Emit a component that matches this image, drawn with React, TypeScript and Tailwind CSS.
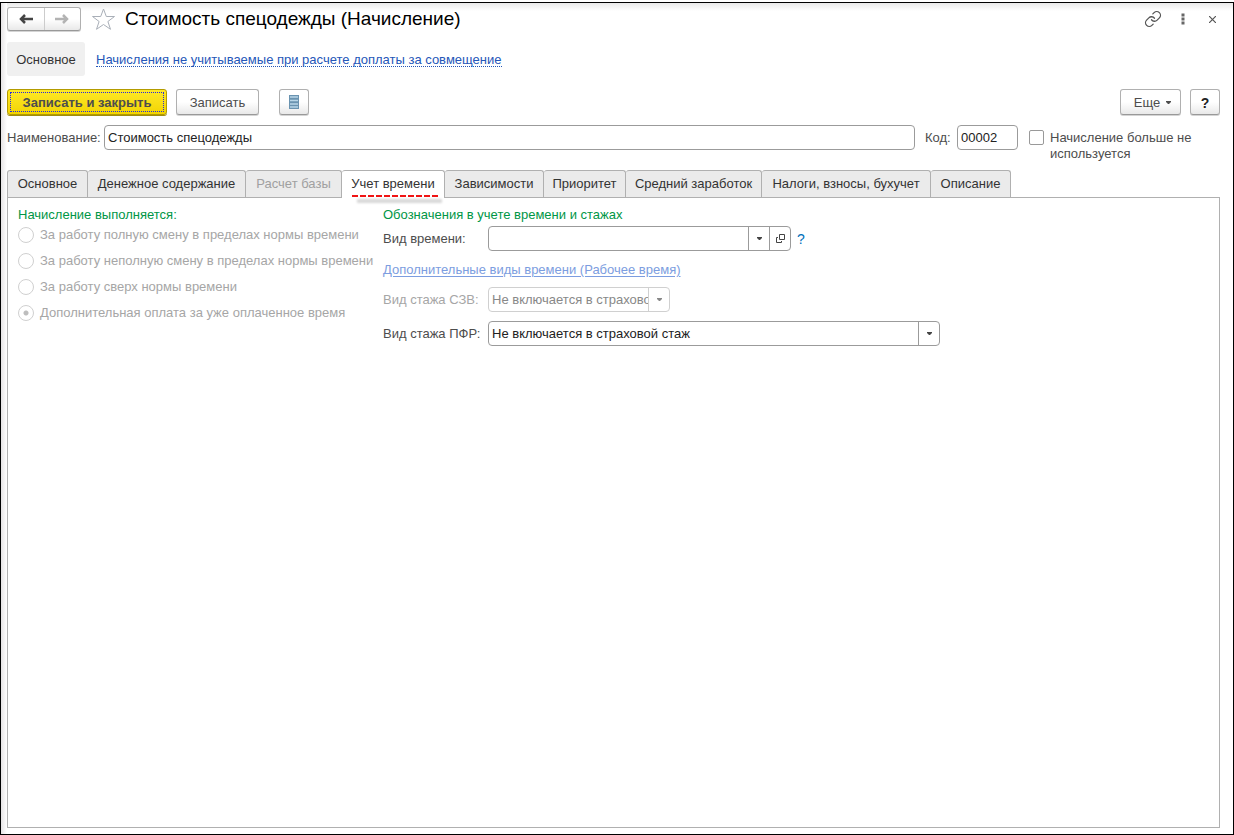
import React from "react";

const tabs = [
  { label: "Основное", width: "w-[81px]" },
  { label: "Денежное содержание", width: "w-[158px]" },
  { label: "Расчет базы", width: "w-24", disabled: true },
  { label: "Учет времени", width: "w-[103px]", active: true },
  { label: "Зависимости", width: "w-[99px]" },
  { label: "Приоритет", width: "w-[82px]" },
  { label: "Средний заработок", width: "w-[136px]" },
  { label: "Налоги, взносы, бухучет", width: "w-[169px]" },
  { label: "Описание", width: "w-20" },
];

const modes = [
  "За работу полную смену в пределах нормы времени",
  "За работу неполную смену в пределах нормы времени",
  "За работу сверх нормы времени",
  "Дополнительная оплата за уже оплаченное время",
];

const raised =
  "rounded-[3px] border border-[#b0b0b0] border-b-[#999] bg-linear-to-b from-white from-50% to-[#e9e9e9] shadow-[0_1px_0_#d4d4d4]";
const field = "rounded-[4px] border border-[#9b9b9b] bg-white text-[#222]";

function Caret() {
  return (
    <svg width="5" height="3" viewBox="0 0 5 3" fill="currentColor" aria-hidden="true">
      <path d="M0 0h5v1L3 3H2L0 1z" />
    </svg>
  );
}

function Arrow({ flip = false }: { flip?: boolean }) {
  return (
    <svg width="14" height="10" viewBox="0 0 14 10" fill="none" stroke="currentColor" strokeWidth="2.500" aria-hidden="true">
      <path d={flip ? "M0 5h12M8 1l4 4-4 4" : "M14 5H2M6 1L2 5l4 4"} />
    </svg>
  );
}

function SelectBox({ id, value, disabled = false, width }: { id: string; value: string; disabled?: boolean; width: string }) {
  return (
    <div className={`${width} flex h-[25px] rounded-[4px] border bg-white ${disabled ? "border-[#d0d0d0] text-[#888]" : "border-[#9b9b9b] text-[#222]"}`}>
      <select id={id} disabled={disabled} className="min-w-0 flex-1 appearance-none overflow-hidden bg-transparent pl-[3px] opacity-100 outline-none">
        <option>{value}</option>
      </select>
      <span className={`flex w-[21px] items-center justify-center border-l ${disabled ? "border-[#d0d0d0]" : "border-[#9b9b9b] text-[#444]"}`}>
        <Caret />
      </span>
    </div>
  );
}

export default function App() {
  return (
    <div className="flex min-h-screen flex-col bg-white pt-[2px] font-['Liberation_Sans',Arial,sans-serif] text-[13px] leading-4 text-[#4d4d4d]">
      <div className="flex flex-1 border border-black bg-linear-to-b from-[#e9e9e9] to-white to-[8px]">
        <div className="w-1.5 shrink-0 bg-linear-to-r from-[#e6e4e5] to-white" />
        <main className="flex min-w-0 flex-1 flex-col pr-[13px] pb-1.5">
          <header className="mt-1 flex h-6 items-center">
            <div className={`${raised} flex h-6 w-[74px]`}>
              <button aria-label="Назад" className="flex flex-1 items-center justify-center border-r border-[#ccc] text-[#444]">
                <Arrow />
              </button>
              <button aria-label="Вперед" className="flex flex-1 items-center justify-center text-[#b3b3b3]">
                <Arrow flip />
              </button>
            </div>
            <button aria-label="В избранное" className="ml-2.5">
              <svg width="26" height="24" viewBox="0 0 26 24" fill="white" stroke="#a9afb8" aria-hidden="true">
                <path d="M12.500 2l2.800 7.500h8.200l-6.600 5 2.600 7.800-7-4.800-7 4.800 2.600-7.800-6.600-5h8.200z" />
              </svg>
            </button>
            <h1 className="ml-2 flex-1 text-[19px] leading-6 text-black">Стоимость спецодежды (Начисление)</h1>
            <button aria-label="Получить ссылку" className="mr-[19px] text-[#555]">
              <svg width="18" height="18" viewBox="0 0 24 24" fill="none" stroke="currentColor" strokeWidth="1.700" strokeLinecap="round" aria-hidden="true">
                <path d="M10 13a5 5 0 0 0 7.540.54l3-3a5 5 0 0 0-7.070-7.070l-1.720 1.710M14 11a5 5 0 0 0-7.540-.54l-3 3a5 5 0 0 0 7.070 7.070l1.710-1.710" />
              </svg>
            </button>
            <button aria-label="Меню" className="mr-6 text-[#666]">
              <svg width="4" height="12" viewBox="0 0 4 12" fill="currentColor" aria-hidden="true">
                <path d="M.5.5h3v3h-3zM.5 4.500h3v3h-3zM.5 8.500h3v3h-3z" />
              </svg>
            </button>
            <button aria-label="Закрыть" className="mr-1 text-[#555]">
              <svg width="7" height="7" viewBox="0 0 7 7" stroke="currentColor" strokeWidth="1.200" aria-hidden="true">
                <path d="M0 0l7 7M7 0L0 7" />
              </svg>
            </button>
          </header>

          <nav className="mt-[11px] flex h-[34px] items-center">
            <a href="#main" className="flex h-full w-[78px] items-center justify-center rounded-[3px] bg-[#f0f0f0] pt-px text-[#333]">Основное</a>
            <a href="#accruals" className="ml-[11px] border-b border-dotted border-[#2456b8] pt-px leading-[13px] text-[#2456b8]">
              Начисления не учитываемые при расчете доплаты за совмещение
            </a>
          </nav>

          <div className="mt-[13px] flex h-[26px]">
            <button className="w-40 rounded-[3px] border border-[#b39b00] bg-linear-to-b from-[#ffe924] to-[#f2d400] p-[2px] font-bold text-[#4d4d4d] shadow-[0_1px_0_#a08c10]">
              <span className="flex h-full items-center justify-center border border-dotted border-[#2828e0] pt-px">Записать и закрыть</span>
            </button>
            <button className={`${raised} ml-[9px] w-[83px] pt-px`}>Записать</button>
            <button aria-label="Список" className={`${raised} ml-5 flex w-[30px] items-center justify-center`}>
              <svg width="10" height="14" viewBox="0 0 10 14" aria-hidden="true">
                <rect width="10" height="14" fill="#6a93b0" />
                <path d="M1 2h8M1 5.500h8M1 9h8M1 12h8" stroke="#b9d6e8" strokeWidth="1.500" />
              </svg>
            </button>
            <button className={`${raised} ml-auto flex w-[61px] items-center justify-center gap-1.5 pt-px pl-1`}>
              Еще <Caret />
            </button>
            <button aria-label="Справка" className={`${raised} ml-[9px] w-[30px] pt-px text-[14px] font-bold text-[#222]`}>?</button>
          </div>

          <div className="mt-2.5 flex items-start">
            <label htmlFor="name" className="w-[97px] shrink-0 pt-[5px] whitespace-nowrap">Наименование:</label>
            <input id="name" defaultValue="Стоимость спецодежды" className={`${field} h-[25px] min-w-0 flex-1 px-[3px]`} />
            <label htmlFor="code" className="ml-2.5 w-8 shrink-0 pt-[5px] whitespace-nowrap">Код:</label>
            <input id="code" defaultValue="00002" className={`${field} h-[25px] w-[61px] px-[3px]`} />
            <input id="unused" type="checkbox" className="mt-[5px] ml-[11px] size-[15px] shrink-0 appearance-none rounded-[2px] border border-[#999] bg-white" />
            <label htmlFor="unused" className="ml-1.5 w-[170px] pt-[5px] pr-5 pb-[3px]">Начисление больше не используется</label>
          </div>

          <div role="tablist" className="mt-[5px] flex h-[27px]">
            {tabs.map((t, i) => (
              <button
                key={t.label}
                role="tab"
                aria-selected={!!t.active}
                disabled={t.disabled}
                className={`${t.width} relative shrink-0 rounded-t-[3px] border-t border-r border-[#b0b0b0] whitespace-nowrap ${i === 0 ? "border-l" : ""} ${
                  t.active ? "z-10 -mb-px bg-white pb-px text-[#333]" : t.disabled ? "bg-[#ebebeb] text-[#a0a0a0]" : "bg-[#ebebeb] text-[#333]"
                }`}
              >
                {t.label}
                {t.active && (
                  <svg className="absolute top-6 left-2.5" width="94" height="12" viewBox="0 0 94 12" aria-hidden="true">
                    <path d="M5 6h85" stroke="#aaa" strokeWidth="4" opacity=".45" className="blur-[1px]" />
                    <path d="M0 1h86" stroke="#f01414" strokeWidth="2" strokeDasharray="6 2" />
                  </svg>
                )}
              </button>
            ))}
          </div>

          <section className="flex flex-1 items-start border border-[#b0b0b0] bg-white pt-[9px] pl-2.5">
            <fieldset disabled className="w-[365px] shrink-0 whitespace-nowrap text-[#a6a6a6]">
              <legend className="text-[#009646]">Начисление выполняется:</legend>
              <div className="mt-1 flex flex-col gap-2.5">
                {modes.map((m, i) => (
                  <label key={m} className="flex h-4 items-center gap-1.5">
                    <input
                      type="radio"
                      name="mode"
                      defaultChecked={i === 3}
                      className="size-4 appearance-none rounded-full border border-[#d0d0d0] bg-white checked:bg-radial checked:from-[#bdbdbd] checked:from-[2px] checked:to-white checked:to-[3px]"
                    />
                    {m}
                  </label>
                ))}
              </div>
            </fieldset>

            <div className="flex min-w-0 flex-1 flex-col">
              <h2 className="text-[#009646]">Обозначения в учете времени и стажах</h2>
              <div className="mt-[3px] flex h-[25px] items-center">
                <label htmlFor="time" className="w-[105px]">Вид времени:</label>
                <div className={`${field} flex h-[25px] w-[303px]`}>
                  <input id="time" className="min-w-0 flex-1 bg-transparent px-[3px] outline-none" />
                  <button aria-label="Выбрать из списка" className="flex w-[21px] items-center justify-center border-l border-[#9b9b9b] text-[#444]">
                    <Caret />
                  </button>
                  <button aria-label="Открыть" className="flex w-[21px] items-center justify-center border-l border-[#9b9b9b] text-[#444]">
                    <svg width="9" height="9" viewBox="0 0 9 9" fill="none" stroke="currentColor" aria-hidden="true">
                      <path d="M3.500.5h5v5h-5zM2 3.500H.5v5h5V7" />
                    </svg>
                  </button>
                </div>
                <button aria-label="Подсказка" className="ml-1.5 text-[14px] text-[#0070bb]">?</button>
              </div>
              <a href="#extra" className="mt-[11px] self-start text-[#7c9de0] underline underline-offset-2">Дополнительные виды времени (Рабочее время)</a>
              <div className="mt-[9px] flex h-[25px] items-center text-[#a6a6a6]">
                <label htmlFor="szv" className="w-[105px]">Вид стажа СЗВ:</label>
                <SelectBox id="szv" value="Не включается в страховой стаж" disabled width="w-[182px]" />
              </div>
              <div className="mt-[9px] flex h-[25px] items-center">
                <label htmlFor="pfr" className="w-[105px]">Вид стажа ПФР:</label>
                <SelectBox id="pfr" value="Не включается в страховой стаж" width="w-[452px]" />
              </div>
            </div>
          </section>
        </main>
      </div>
    </div>
  );
}
